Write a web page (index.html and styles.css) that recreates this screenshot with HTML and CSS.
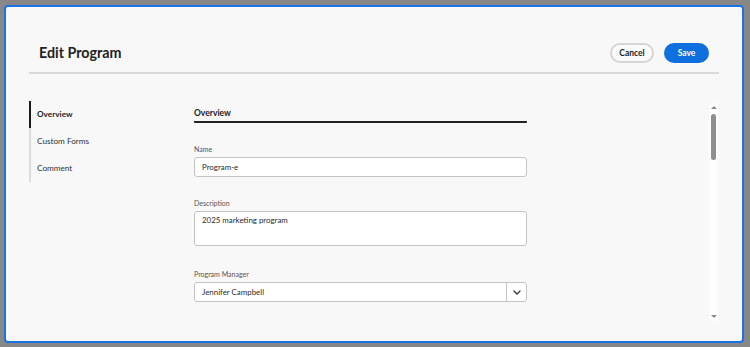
FILE: index.html
```html
<!DOCTYPE html>
<html>

<head>
    <title>Edit Program</title>
    <link rel="stylesheet" href="styles.css">
</head>

<body>
    <div class="backdrop">
        <div class="modal">
            <div class="modal-header">
                <h2 class="modal-title">Edit Program</h2>
                <div class="header-actions">
                    <button class="btn btn-cancel">Cancel</button>
                    <button class="btn btn-save">Save</button>
                </div>
            </div>

            <div class="modal-body">
                <!-- Side navigation -->
                <div class="side-nav">
                    <div class="nav-item active">Overview</div>
                    <div class="nav-item">Custom Forms</div>
                    <div class="nav-item">Comment</div>
                </div>

                <div class="form-panel">
                    <div class="section-title">Overview</div>

                    <div class="field">
                        <label class="field-label">Name</label>
                        <div class="text-input">Program-e</div>
                    </div>

                    <div class="field">
                        <label class="field-label">Description</label>
                        <div class="text-input textarea">2025 marketing program</div>
                    </div>

                    <div class="field">
                        <label class="field-label">Program Manager</label>
                        <div class="select-input">
                            <div class="select-value">Jennifer Campbell</div>
                            <div class="select-button">
                                <svg width="8" height="5" viewBox="0 0 8 5">
                                    <path d="M1 1 L4 4 L7 1" fill="none" stroke="#333" stroke-width="1.3" stroke-linecap="round" stroke-linejoin="round" />
                                </svg>
                            </div>
                        </div>
                    </div>
                </div>

                <div class="spacer"></div>

                <!-- Fake scrollbar -->
                <div class="scrollbar">
                    <div class="scroll-arrow up"></div>
                    <div class="scroll-thumb"></div>
                    <div class="scroll-track"></div>
                    <div class="scroll-arrow down"></div>
                </div>
            </div>
        </div>
    </div>
</body>

</html>
```

FILE: styles.css
```css
html,
body {
    margin: 0;
    padding: 0;
}

body {
    width: 750px;
    height: 347px;
    background: #878787;
    font-family: Lato, 'Noto Sans', sans-serif;
    color: #2c2c2c;
    overflow: hidden;
}

.backdrop {
    padding: 5px 0 0 4px;
}

.modal {
    width: 740px;
    height: 338px;
    box-sizing: border-box;
    background: #f8f8f8;
    border: 2px solid #1a73e8;
    border-radius: 4px;
    padding: 0 23px;
}

.modal-header {
    display: flex;
    align-items: center;
    justify-content: space-between;
    height: 67px;
    box-sizing: border-box;
    padding: 26px 10px 0 10px;
    border-bottom: 2px solid #dadada;
}

.modal-title {
    margin: 0;
    font-size: 14.3px;
    font-weight: 700;
    color: #222;
}

.header-actions {
    display: flex;
    gap: 10px;
}

.btn {
    height: 20px;
    box-sizing: border-box;
    border-radius: 10px;
    font-family: Lato, sans-serif;
    font-size: 8.5px;
    font-weight: 700;
    padding: 0;
    cursor: pointer;
}

.btn-cancel {
    width: 44px;
    background: #fafafa;
    border: 2px solid #d6d6d6;
    color: #222;
}

.btn-save {
    width: 45px;
    background: #0f6fde;
    border: none;
    color: white;
}

.modal-body {
    display: flex;
    padding-top: 27px;
}

/* Side nav */
.side-nav {
    width: 165px;
    flex-shrink: 0;
    align-self: flex-start;
}

.nav-item {
    height: 27px;
    line-height: 27px;
    padding-left: 6px;
    border-left: 2px solid #dddddd;
    font-size: 8.2px;
    color: #333;
}

.nav-item.active {
    border-left-color: #1b1b1b;
    font-weight: 700;
    color: #222;
}

/* Form */
.form-panel {
    width: 333px;
    flex-shrink: 0;
}

.section-title {
    font-size: 8.5px;
    font-weight: 700;
    color: #222;
    line-height: 12px;
    padding: 6px 0 2px 0;
    border-bottom: 2.5px solid #222;
    border-radius: 0 0 1px 1px;
}

.field {
    margin-top: 21px;
}

.field:last-child {
    margin-top: 23px;
}

.field-label {
    display: block;
    font-size: 7px;
    color: #555;
    line-height: 10px;
    margin-bottom: 3px;
}

.text-input {
    height: 20px;
    box-sizing: border-box;
    background: white;
    border: 1px solid #c4c4c4;
    border-radius: 3px;
    padding: 0 7px;
    font-size: 7.9px;
    line-height: 18px;
    color: #2a2a2a;
}

.textarea {
    height: 35px;
    line-height: 16px;
}

.select-input {
    display: flex;
    height: 20px;
    box-sizing: border-box;
    background: white;
    border: 1px solid #c4c4c4;
    border-radius: 3px;
}

.select-value {
    flex-grow: 1;
    padding: 0 7px;
    font-size: 7.9px;
    line-height: 18px;
    color: #2a2a2a;
}

.select-button {
    width: 19px;
    border-left: 1px solid #c4c4c4;
    display: flex;
    align-items: center;
    justify-content: center;
}

.spacer {
    flex-grow: 1;
}

/* Scrollbar */
.scrollbar {
    width: 9px;
    height: 218px;
    margin-top: 2px;
    margin-right: 1px;
    background: #fdfdfd;
    display: flex;
    flex-direction: column;
    align-items: center;
}

.scroll-arrow {
    width: 0;
    height: 0;
    border-left: 3px solid transparent;
    border-right: 3px solid transparent;
}

.scroll-arrow.up {
    margin-top: 3px;
    border-bottom: 3px solid #8c8c8c;
}

.scroll-arrow.down {
    margin-bottom: 3px;
    border-top: 3px solid #8c8c8c;
}

.scroll-thumb {
    width: 5px;
    height: 46px;
    margin-top: 5px;
    background: #8f8f8f;
    border-radius: 3px;
}

.scroll-track {
    flex-grow: 1;
}
```
